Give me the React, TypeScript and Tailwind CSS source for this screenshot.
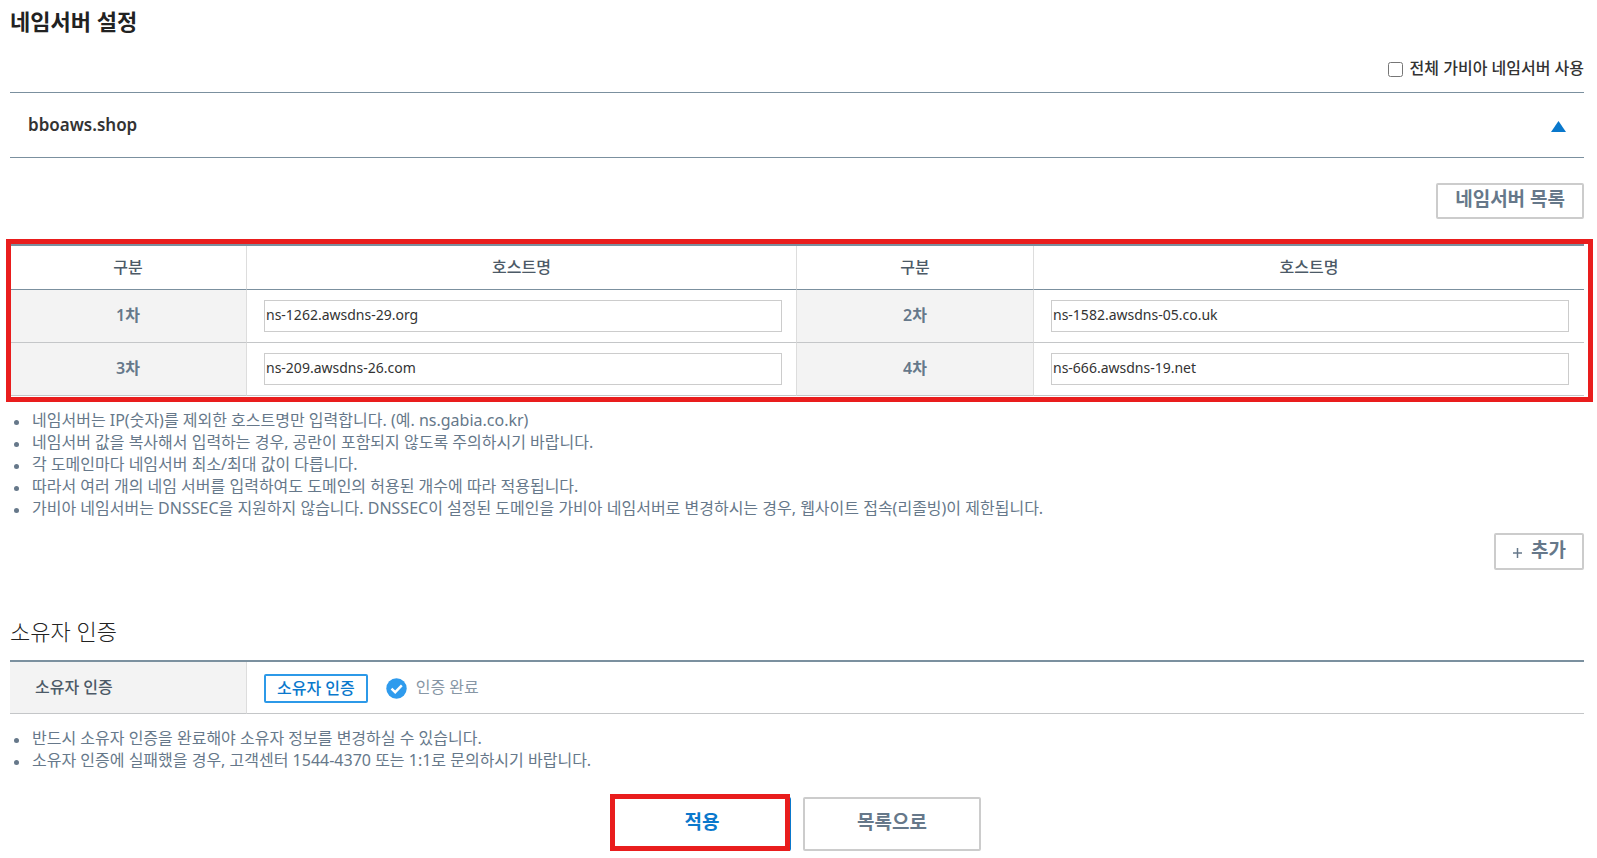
import { useState } from 'react'

const rows = [
    [
        { label: '1차', host: 'ns-1262.awsdns-29.org' },
        { label: '2차', host: 'ns-1582.awsdns-05.co.uk' },
    ],
    [
        { label: '3차', host: 'ns-209.awsdns-26.com' },
        { label: '4차', host: 'ns-666.awsdns-19.net' },
    ],
]

const hostNotes = [
    '네임서버는 IP(숫자)를 제외한 호스트명만 입력합니다. (예. ns.gabia.co.kr)',
    '네임서버 값을 복사해서 입력하는 경우, 공란이 포함되지 않도록 주의하시기 바랍니다.',
    '각 도메인마다 네임서버 최소/최대 값이 다릅니다.',
    '따라서 여러 개의 네임 서버를 입력하여도 도메인의 허용된 개수에 따라 적용됩니다.',
    '가비아 네임서버는 DNSSEC을 지원하지 않습니다. DNSSEC이 설정된 도메인을 가비아 네임서버로 변경하시는 경우, 웹사이트 접속(리졸빙)이 제한됩니다.',
]

const ownerNotes = [
    '반드시 소유자 인증을 완료해야 소유자 정보를 변경하실 수 있습니다.',
    '소유자 인증에 실패했을 경우, 고객센터 1544-4370 또는 1:1로 문의하시기 바랍니다.',
]

function Notes({ items }: { items: string[] }) {
    return (
        <ul className="text-[16px] leading-[22px] text-[#66788a]">
            {items.map((item) => (
                <li key={item} className="flex items-center gap-[13px] pl-1">
                    <span className="mt-1 h-[5px] w-[5px] shrink-0 rounded-full bg-[#66788a]" />
                    <span>{item}</span>
                </li>
            ))}
        </ul>
    )
}

export default function App() {
    const [open, setOpen] = useState(true)
    const [useAll, setUseAll] = useState(false)

    return (
        <main className="bg-white pr-[13px] pb-2 pl-[10px] font-['Noto_Sans','Noto_Sans_CJK_KR',sans-serif] text-[#333]">
            <h1 className="pt-[7px] pb-px text-[22px] leading-7 font-bold text-[#222]">네임서버 설정</h1>

            <div className="mt-5 flex items-center justify-end gap-[7px] pb-3">
                <input
                    id="use-all"
                    type="checkbox"
                    checked={useAll}
                    onChange={(e) => setUseAll(e.target.checked)}
                    className="mt-[2px] h-[15px] w-[15px]"
                />
                <label htmlFor="use-all" className="text-[16px] leading-6 font-medium">전체 가비아 네임서버 사용</label>
            </div>

            <div className="flex h-[66px] items-center justify-between border-y border-[#7b909f] pr-[18px] pl-[18px]">
                <strong className="text-[17px] leading-6 font-semibold">bboaws.shop</strong>
                <button type="button" aria-label="접기" aria-expanded={open} onClick={() => setOpen(!open)} className="pt-[2px]">
                    <svg width="15" height="11" viewBox="0 0 15 11" className={open ? '' : 'rotate-180'}>
                        <path d="M7.5 0L15 11H0z" fill="#0a78cc" />
                    </svg>
                </button>
            </div>

            {open && (
                <>
                    <div className="mt-[25px] flex justify-end">
                        <button type="button" className="h-9 rounded-[2px] border-2 border-[#ccc] px-[17px] pb-1 text-[19px] leading-7 font-bold text-[#66788a]">
                            네임서버 목록
                        </button>
                    </div>

                    <div className="relative mt-[25px]">
                        <table className="w-full table-fixed border-separate border-spacing-0 border-t-2 border-[#7b909f] text-[16px]">
                            <colgroup>
                                <col className="w-[237px]" />
                                <col />
                                <col className="w-[237px]" />
                                <col />
                            </colgroup>
                            <thead>
                                <tr className="h-11 text-[#4c5a67]">
                                    <th scope="col" className="border-r border-b border-r-[#ddd] border-b-[#7b909f] pb-[2px] font-medium">구분</th>
                                    <th scope="col" className="border-r border-b border-r-[#ddd] border-b-[#7b909f] pb-[2px] font-medium">호스트명</th>
                                    <th scope="col" className="border-r border-b border-r-[#ddd] border-b-[#7b909f] pb-[2px] font-medium">구분</th>
                                    <th scope="col" className="border-b border-[#7b909f] pb-[2px] font-medium">호스트명</th>
                                </tr>
                            </thead>
                            <tbody>
                                {rows.map((row) => (
                                    <tr key={row[0].label} className="h-[53px]">
                                        {row.map(({ label, host }, i) => [
                                            <th key={label} scope="row" className="border-r border-b border-r-[#ddd] border-b-[#c4c6c8] bg-[#f3f3f3] pb-[2px] font-semibold text-[#66788a]">
                                                <label htmlFor={label}>{label}</label>
                                            </th>,
                                            <td key={host} className={`border-b border-b-[#c4c6c8] pl-[17px] ${i === 0 ? 'border-r border-r-[#ddd] pr-[14px]' : 'pr-[15px]'}`}>
                                                <input
                                                    id={label}
                                                    type="text"
                                                    defaultValue={host}
                                                    className="block h-8 w-full border border-[#ccc] px-px pb-[4px] text-[14px] text-[#333]"
                                                />
                                            </td>,
                                        ])}
                                    </tr>
                                ))}
                            </tbody>
                        </table>
                        <div className="pointer-events-none absolute -top-[5px] -right-[9px] -bottom-[6px] -left-1 border-[5px] border-[#e91d1d]" />
                    </div>

                    <div className="mt-[13px]">
                        <Notes items={hostNotes} />
                    </div>

                    <div className="mt-[14px] flex justify-end">
                        <button type="button" className="flex h-[37px] items-center gap-2 rounded-[2px] border-2 border-[#ccc] px-4 pb-1 text-[19px] leading-7 font-bold text-[#66788a]">
                            <svg width="11" height="11" viewBox="0 0 11 11" className="mt-[6px]">
                                <path d="M5.5 1v10M1 6h9" stroke="currentColor" strokeWidth="1.5" />
                            </svg>
                            추가
                        </button>
                    </div>
                </>
            )}

            <h2 className="mt-[45px] pb-px text-[22px] leading-8 font-light text-[#222]">소유자 인증</h2>

            <table className="mt-3 w-full table-fixed border-separate border-spacing-0 border-t-2 border-[#7b909f] text-[16px]">
                <colgroup>
                    <col className="w-[237px]" />
                    <col />
                </colgroup>
                <tbody>
                    <tr className="h-[52px]">
                        <th scope="row" className="border-r border-b border-r-[#ddd] border-b-[#c4c6c8] bg-[#f3f3f3] pb-[2px] pl-[25px] text-left font-medium text-[#4c5a67]">
                            소유자 인증
                        </th>
                        <td className="border-b border-[#c4c6c8] pt-px pl-[17px]">
                            <div className="flex items-center">
                                <button type="button" className="h-[29px] rounded-[2px] border-2 border-[#2c99e8] px-[11px] pb-[2px] leading-6 font-medium text-[#0a78cc]">
                                    소유자 인증
                                </button>
                                <svg width="21" height="21" viewBox="0 0 21 21" className="ml-[18px]">
                                    <circle cx="10.5" cy="10.5" r="10.2" fill="#2f9bed" />
                                    <path d="M5.5 10.6l3.7 3.6 6.6-6.9" fill="none" stroke="#fff" strokeWidth="2.4" />
                                </svg>
                                <span className="ml-[9px] pb-[2px] leading-6 text-[#8796a5]">인증 완료</span>
                            </div>
                        </td>
                    </tr>
                </tbody>
            </table>

            <div className="mt-[13px]">
                <Notes items={ownerNotes} />
            </div>

            <div className="mt-[26px] flex justify-center gap-3">
                <div className="relative">
                    <button type="button" className="h-[54px] w-[178px] rounded-[2px] border-2 border-[#0a78cc] pb-1 text-[19px] font-bold text-[#0a78cc]">
                        적용
                    </button>
                    <div className="pointer-events-none absolute -top-[3px] right-px bottom-0 -left-[3px] border-[5px] border-[#e91d1d]" />
                </div>
                <button type="button" className="h-[54px] w-[178px] rounded-[2px] border-2 border-[#ccc] pb-1 text-[19px] font-bold text-[#66788a]">
                    목록으로
                </button>
            </div>
        </main>
    )
}
